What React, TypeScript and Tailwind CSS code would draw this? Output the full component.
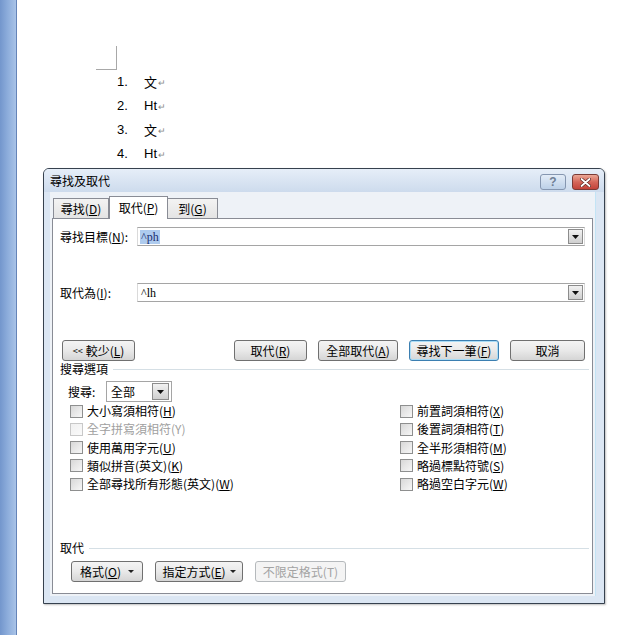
import clsx from 'clsx';
import type { ReactNode } from 'react';

const cjk = "font-['Noto_Sans_CJK_TC','Noto_Sans_CJK_SC',sans-serif]";

function Mn({ k }: { k: string }) {
  return (
    <>
      (<span className="underline">{k}</span>)
    </>
  );
}

function Tri({ className }: { className?: string }) {
  return (
    <svg className={className} width="6" height="3" viewBox="0 0 6 3">
      <path d="M0 0h6L3 3z" fill="#222" />
    </svg>
  );
}

function Btn({ w, children, primary, disabled }: { w: string; children: ReactNode; primary?: boolean; disabled?: boolean }) {
  return (
    <div
      className={clsx(
        'flex h-[21px] items-center justify-center rounded-[3px] border bg-linear-to-b text-[12px] leading-none',
        w,
        disabled
          ? 'border-[#b5b9bc] from-[#f4f4f4] to-[#f4f4f4] text-[#a3a3a3]'
          : 'from-[#f4f4f4] via-[#e9e9e9] to-[#d5d5d5] text-black',
        !disabled && (primary ? 'border-[#3c7fb1] shadow-[inset_0_0_0_1px_#a9dcf6]' : 'border-[#707070]')
      )}
    >
      {children}
    </div>
  );
}

function DropBtn({ className }: { className?: string }) {
  return (
    <div className={clsx('flex h-[15px] w-[15px] items-center justify-center border border-[#8c8c8c] bg-linear-to-b from-[#f2f2f2] to-[#cfcfcf]', className)}>
      <svg width="7" height="4" viewBox="0 0 7 4">
        <path d="M0 0h7L3.5 4z" fill="#111" />
      </svg>
    </div>
  );
}

function Check({ label, disabled }: { label: ReactNode; disabled?: boolean }) {
  return (
    <div className="flex h-[18.25px] items-center gap-[4px]">
      <div className={clsx('h-[13px] w-[13px] border bg-linear-to-br', disabled ? 'border-[#c8c8c8] from-[#f0f0f0] to-[#fafafa]' : 'border-[#8e8f8f] from-[#d8d8d8] to-[#f7f7f7]')} />
      <span className={clsx('text-[12px] leading-none', disabled ? 'text-[#a0a0a0]' : 'text-black')}>{label}</span>
    </div>
  );
}

function Heading({ text }: { text: string }) {
  return (
    <div className="flex h-[16px] items-center">
      <span className="text-[12px] leading-none">{text}</span>
      <div className="ml-[5px] mr-[-4px] h-px flex-1 bg-[#d5dfe5]" />
    </div>
  );
}

function Field({ label, value, selected }: { label: ReactNode; value: string; selected?: boolean }) {
  return (
    <div className="flex h-[19px] items-center">
      <span className="w-[77px] text-[12px] leading-none">{label}</span>
      <div className="flex h-[19px] flex-1 items-center border border-[#a5a5a5] border-x-[#dadada] bg-white pl-[2px] pr-[1px]">
        <span className={clsx("px-[1px] font-['Liberation_Serif',serif] text-[12px] leading-[14px]", selected ? 'bg-[#aecbee] text-[#1b2d6e]' : 'text-black')}>{value}</span>
        <DropBtn className="ml-auto" />
      </div>
    </div>
  );
}

function Dialog() {
  return (
    <div className={clsx('absolute left-[43px] top-[168px] flex h-[436px] w-[562px] flex-col rounded-t-[6px] border border-[#36414e] bg-[#dbe6f3] shadow-[1px_1px_2px_rgba(0,0,0,0.25)]', cjk)}>
      <div className="flex h-[23px] items-start rounded-t-[5px] bg-linear-to-b from-[#e6eef8] to-[#cddbed]">
        <span className="mt-[6px] pl-[6px] text-[12px] leading-none text-black">尋找及取代</span>
        <div className="ml-auto mr-[5px] mt-[5px] flex gap-[6px]">
          <div className="flex h-[16px] w-[26px] items-center justify-center rounded-[3px] border border-[#8596b0] bg-linear-to-b from-[#e3ecf7] to-[#bcd0e8]">
            <span className="font-['Liberation_Sans',sans-serif] text-[12px] font-bold leading-none text-[#6f7f96]">?</span>
          </div>
          <div className="flex h-[16px] w-[27px] items-center justify-center rounded-[3px] border border-[#7a3b36] bg-linear-to-b from-[#eaa796] via-[#d5665a] to-[#c3433a]">
            <svg width="11" height="9" viewBox="0 0 11 9">
              <path d="M1.5 1l8 7M9.5 1l-8 7" stroke="#5a2420" strokeWidth="3.2" strokeLinecap="round" />
              <path d="M1.5 1l8 7M9.5 1l-8 7" stroke="#fff" strokeWidth="1.8" strokeLinecap="round" />
            </svg>
          </div>
        </div>
      </div>

      <div className="mb-[7px] ml-[6px] mr-[8px] flex flex-1 flex-col border-r border-[#c3e4f5] bg-[#eef2f7] px-[2px] pb-[2px] pt-[4px]">
        <div className="flex h-[22px] items-end pl-[1px] text-[12px] leading-none">
          <div className="flex h-[20px] w-[56px] items-center justify-center border border-b-0 border-[#898c95] bg-linear-to-b from-[#f3f3f3] to-[#e4e4e4]">
            尋找<Mn k="D" />
          </div>
          <div className="z-10 -mb-px flex h-[23px] w-[59px] items-center justify-center border border-b-0 border-[#898c95] bg-white">
            取代<Mn k="P" />
          </div>
          <div className="flex h-[20px] w-[50px] items-center justify-center border border-b-0 border-l-0 border-[#898c95] bg-linear-to-b from-[#f3f3f3] to-[#e4e4e4]">
            到<Mn k="G" />
          </div>
        </div>

        <div className="flex h-[376px] flex-col border border-[#898c95] bg-white px-[7px] pt-[8px] text-black">
          <Field label={<>尋找目標<Mn k="N" />:</>} value="^ph" selected />
          <div className="mt-[37px]">
            <Field label={<>取代為<Mn k="I" />:</>} value="^lh" />
          </div>

          <div className="mt-[38px] flex items-center">
            <div className="ml-[2px]">
              <Btn w="w-[73px]">
                <span className="mr-[3px] text-[9px]">&lt;&lt;</span>較少<Mn k="L" />
              </Btn>
            </div>
            <div className="ml-auto flex gap-[11px]">
              <Btn w="w-[73px]">取代<Mn k="R" /></Btn>
              <Btn w="w-[80px]">全部取代<Mn k="A" /></Btn>
              <Btn w="w-[90px]" primary>尋找下一筆<Mn k="F" /></Btn>
              <Btn w="w-[75px]">取消</Btn>
            </div>
          </div>

          <Heading text="搜尋選項" />

          <div className="mt-[4px] flex h-[21px] items-center pl-[8px]">
            <span className="w-[38px] text-[12px] leading-none">搜尋:</span>
            <div className="flex h-[21px] w-[66px] items-center border border-[#a5a5a5] bg-white pl-[4px] pr-[2px]">
              <span className="text-[12px] leading-none">全部</span>
              <DropBtn className="ml-auto h-[17px] w-[17px]" />
            </div>
          </div>

          <div className="grid grid-cols-[330px_1fr] pl-[10px]">
            <div className="flex flex-col">
              <Check label={<>大小寫須相符<Mn k="H" /></>} />
              <Check label="全字拼寫須相符(Y)" disabled />
              <Check label={<>使用萬用字元<Mn k="U" /></>} />
              <Check label={<>類似拼音(英文)<Mn k="K" /></>} />
              <Check label={<>全部尋找所有形態(英文)<Mn k="W" /></>} />
            </div>
            <div className="flex flex-col">
              <Check label={<>前置詞須相符<Mn k="X" /></>} />
              <Check label={<>後置詞須相符<Mn k="T" /></>} />
              <Check label={<>全半形須相符<Mn k="M" /></>} />
              <Check label={<>略過標點符號<Mn k="S" /></>} />
              <Check label={<>略過空白字元<Mn k="W" /></>} />
            </div>
          </div>

          <div className="mt-[47px]">
            <Heading text="取代" />
          </div>

          <div className="ml-[11px] mt-[5px] flex gap-[12px]">
            <Btn w="w-[72px]">
              格式<Mn k="O" />
              <Tri className="ml-[7px]" />
            </Btn>
            <Btn w="w-[88px]">
              指定方式<Mn k="E" />
              <Tri className="ml-[4px]" />
            </Btn>
            <Btn w="w-[91px]" disabled>不限定格式(T)</Btn>
          </div>
        </div>
      </div>
    </div>
  );
}

export default function App() {
  const items = ['文', 'Ht', '文', 'Ht'];
  return (
    <div className="relative flex h-[635px] w-[620px] overflow-hidden bg-white">
      <div className="h-full w-[17px] border-r border-[#6584b8] bg-linear-to-r from-[#7396cc] via-[#8eaedc] to-[#a9c3e7]" />
      <div className="flex flex-1 flex-col">
        <div className="ml-[79px] mt-[46px] h-[24px] w-[21px] border-b border-r border-[#a8a8a8]" />
        <div className="ml-[100px] flex flex-col">
          {items.map((t, i) => (
            <div key={i} className="flex h-[24px] items-center text-[13px] text-black">
              <span className="w-[27px] font-['Liberation_Sans',sans-serif]">{i + 1}.</span>
              <span className={t === '文' ? cjk : "font-['Liberation_Sans',sans-serif]"}>{t}</span>
              <span className="ml-[1px] mt-[2px] text-[9px] text-[#8a8a8a]">↵</span>
            </div>
          ))}
        </div>
      </div>
      <Dialog />
    </div>
  );
}
